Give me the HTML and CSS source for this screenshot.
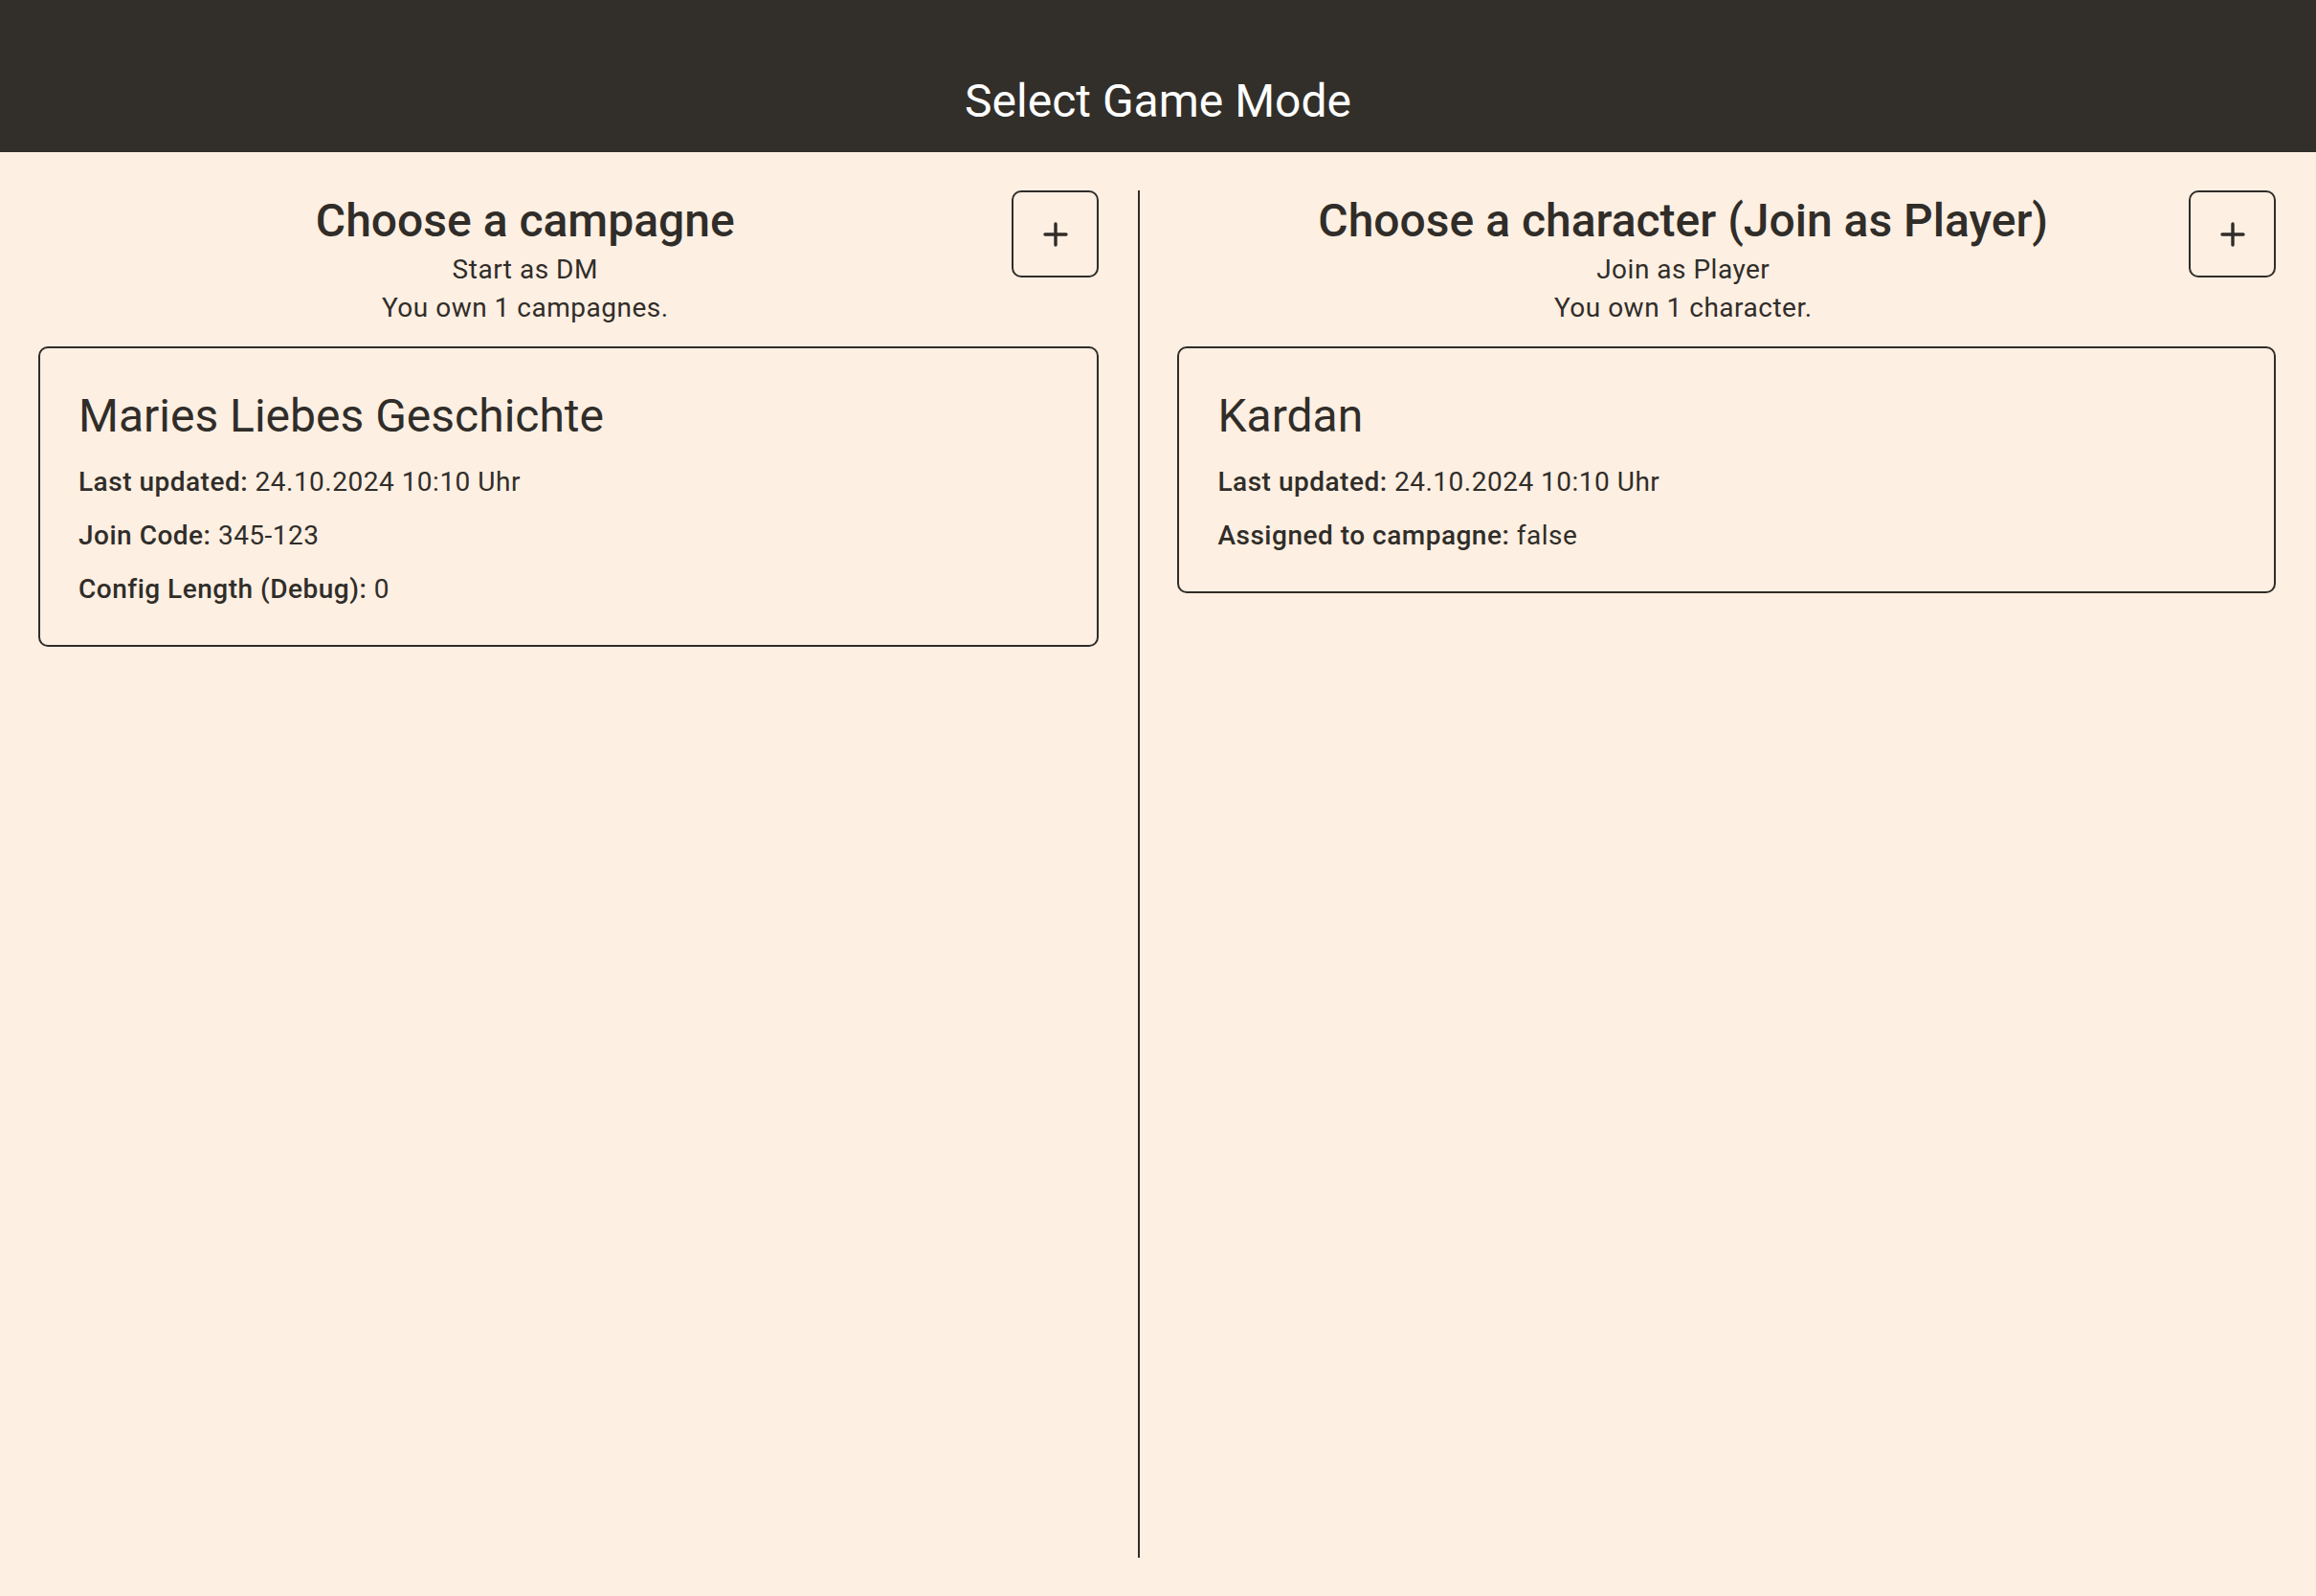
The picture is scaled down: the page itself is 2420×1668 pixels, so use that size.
FILE: index.html
```html
<!DOCTYPE html>
<html lang="en">
<head>
    <meta charset="UTF-8">
    <title>Select Game Mode</title>

    <link rel="stylesheet" href="styles.css">
</head>
<body>
    <div class="topbar">
        <div class="topbar-title">Select Game Mode</div>
    </div>
    <div class="modes">
        <div class="mode">
            <div class="mode-head">
                <div class="mode-intro">
                    <div class="mode-title">Choose a campagne</div>
                    <div class="mode-sub">Start as DM</div>
                    <div class="mode-sub">You own 1 campagnes.</div>
                </div>
                <button class="add-button" title="New campagne">
                    <svg width="28" height="28" viewBox="0 0 28 28">
                        <path d="M14 3 V25 M3 14 H25" stroke="#302d29" stroke-width="3.4" stroke-linecap="round" fill="none"/>
                    </svg>
                </button>
            </div>
            <div class="card">
                <div class="card-title">Maries Liebes Geschichte</div>
                <div class="card-rows">
                    <div class="card-row"><span class="card-label">Last updated:</span> 24.10.2024 10:10 Uhr</div>
                    <div class="card-row"><span class="card-label">Join Code:</span> 345-123</div>
                    <div class="card-row"><span class="card-label">Config Length (Debug):</span> 0</div>
                </div>
            </div>
        </div>
        <div class="divider"></div>
        <div class="mode">
            <div class="mode-head">
                <div class="mode-intro">
                    <div class="mode-title">Choose a character (Join as Player)</div>
                    <div class="mode-sub">Join as Player</div>
                    <div class="mode-sub">You own 1 character.</div>
                </div>
                <button class="add-button" title="New character">
                    <svg width="28" height="28" viewBox="0 0 28 28">
                        <path d="M14 3 V25 M3 14 H25" stroke="#302d29" stroke-width="3.4" stroke-linecap="round" fill="none"/>
                    </svg>
                </button>
            </div>
            <div class="card">
                <div class="card-title">Kardan</div>
                <div class="card-rows">
                    <div class="card-row"><span class="card-label">Last updated:</span> 24.10.2024 10:10 Uhr</div>
                    <div class="card-row"><span class="card-label">Assigned to campagne:</span> false</div>
                </div>
            </div>
        </div>
    </div>
</body>
</html>
```

FILE: styles.css
```css
html, body {
    margin: 0;
    height: 100%;
}

body {
    display: flex;
    flex-direction: column;
    background: #fdefe2;
    color: #302d29;
    font-family: Roboto, "Noto Sans", sans-serif;
    font-size: 28px;
    letter-spacing: 0.5px;
}

.topbar {
    height: 159px;
    box-sizing: border-box;
    padding-top: 74px;
    background: #322f2a;
    text-align: center;
}

.topbar-title {
    color: #ffffff;
    font-size: 48px;
    line-height: 64px;
    letter-spacing: 0;
}

.modes {
    flex: 1;
    display: grid;
    grid-template-columns: 1108fr 2px 1147fr;
    column-gap: 40px;
    padding: 40px 42px 40px 40px;
    min-height: 0;
}

.divider {
    background: #302d29;
    margin-left: 1px;
    width: 2px;
}

.mode-head {
    display: flex;
    align-items: flex-start;
}

.mode-intro {
    flex: 1;
    text-align: center;
}

.mode-title {
    font-size: 48px;
    font-weight: 500;
    line-height: 63px;
    letter-spacing: 0;
}

.mode-sub {
    line-height: 40px;
}

.add-button {
    width: 91px;
    height: 91px;
    display: flex;
    align-items: center;
    justify-content: center;
    padding: 0;
    border: 2px solid #302d29;
    border-radius: 10px;
    background: transparent;
    cursor: pointer;
}

.card {
    margin-top: 20px;
    padding: 40px;
    border: 2px solid #302d29;
    border-radius: 10px;
}

.card-title {
    font-size: 48px;
    line-height: 62px;
    letter-spacing: 0;
}

.card-rows {
    display: flex;
    flex-direction: column;
    gap: 20px;
    margin-top: 20px;
}

.card-row {
    line-height: 36px;
}

.card-label {
    font-weight: 500;
}
```
